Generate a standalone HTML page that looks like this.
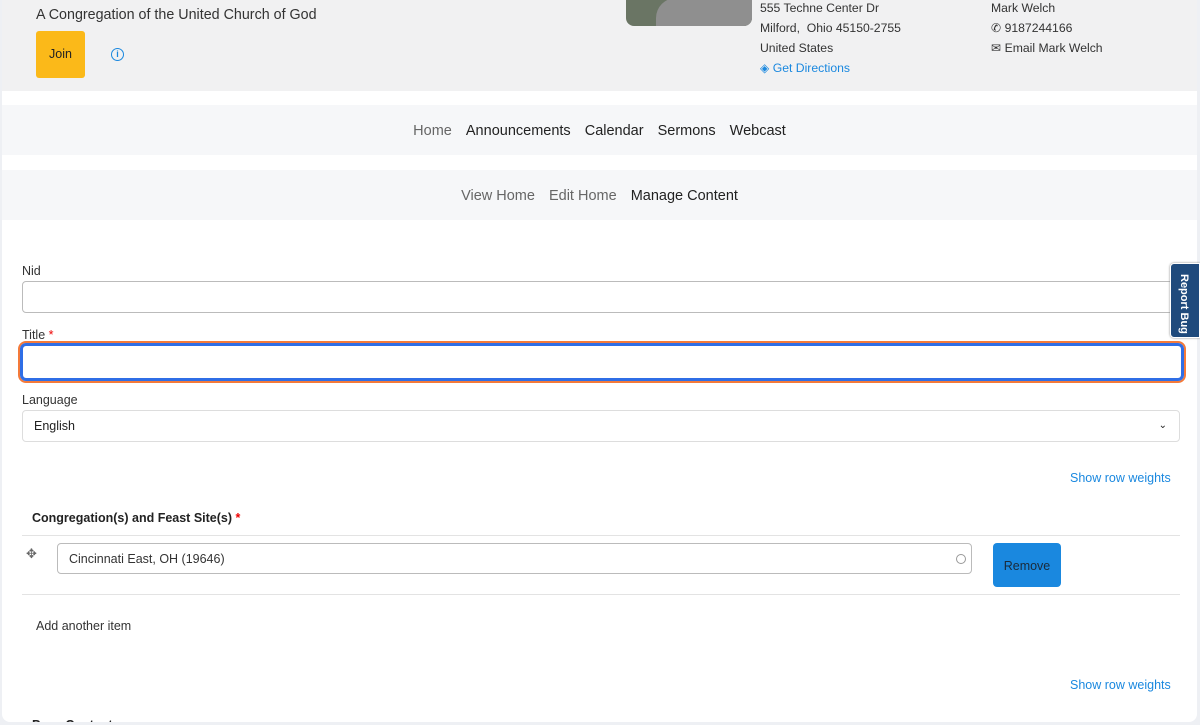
<!DOCTYPE html>
<html><head><meta charset="utf-8"><style>
*{box-sizing:border-box;margin:0;padding:0}
body{width:1200px;height:725px;overflow:hidden;background:#eef0f4;font-family:"Liberation Sans",sans-serif;color:#222;position:relative}
.card{position:absolute;left:2px;top:-10px;width:1195px;height:732px;background:#fff;border-radius:8px;overflow:hidden}
.hdr{position:absolute;left:-2px;top:0;width:1200px;height:101px;background:#f1f1f2}
.abs{position:absolute}
.t13{font-size:12.5px;color:#333}
.nav{position:absolute;left:0;width:100%;height:50px;background:#f6f7f9;text-align:center;font-size:14.5px;line-height:52px}
.nav span{margin:0 5px;color:#222}
.nav .g{color:#666}
label{position:absolute;font-size:12.5px;color:#333}
.inp{position:absolute;border:1px solid #bbb;border-radius:4px;background:#fff}
.link{color:#1a88df;font-size:12.5px}
</style></head><body>
<div class="card">
<div class="hdr"></div>
<div class="abs" style="left:34px;top:17px;font-size:14.3px;color:#333">A Congregation of the United Church of God</div>
<div class="abs" style="left:34px;top:41px;width:49px;height:47px;background:#fbb919;border-radius:3px;font-size:12.5px;line-height:47px;text-align:center;color:#222">Join</div>
<div class="abs" style="left:109px;top:58px;width:13px;height:13px;border:1.5px solid #1a88df;border-radius:50%;font-size:9px;line-height:10px;text-align:center;color:#1a88df;font-weight:bold">i</div>
<div class="abs" style="left:624px;top:0;width:126px;height:36px;background:#6a7564;border-radius:0 0 8px 8px;overflow:hidden"><div style="position:absolute;left:30px;top:8px;width:100px;height:30px;background:#8f8f8f;border-radius:20px 0 0 0"></div></div>
<div class="abs t13" style="left:758px;top:8px;line-height:20px;font-size:12.2px">555 Techne Center Dr<br>Milford,&nbsp; Ohio 45150-2755<br>United States<br><span class="link" style="font-size:12.2px">&#9672; Get Directions</span></div>
<div class="abs t13" style="left:989px;top:8px;line-height:20px;font-size:12.2px">Mark Welch<br>&#9990; 9187244166<br>&#9993; Email Mark Welch</div>
<div class="nav" style="top:115px"><span class="g">Home</span> <span>Announcements</span> <span>Calendar</span> <span>Sermons</span> <span>Webcast</span></div>
<div class="nav" style="top:180px"><span class="g">View Home</span> <span class="g">Edit Home</span> <span>Manage Content</span></div>
<label style="left:20px;top:274px">Nid</label>
<div class="inp" style="left:20px;top:291px;width:1160px;height:32px"></div>
<label style="left:20px;top:338px">Title <span style="color:#e00">*</span></label>
<div class="inp" style="left:16px;top:351px;width:1168px;height:42px;border:2px solid #f47a3a;border-radius:8px;padding:0"><div style="width:100%;height:100%;border:3px solid #2f6ee6;border-radius:6px"></div></div>
<label style="left:20px;top:403px">Language</label>
<div class="inp" style="left:20px;top:420px;width:1158px;height:32px;border-color:#ddd;font-size:12.5px;line-height:30px;padding-left:11px">English<span style="position:absolute;right:12px;top:0;font-size:10px">&#8964;</span></div>
<div class="abs link" style="left:1068px;top:481px">Show row weights</div>
<div class="abs" style="left:30px;top:521px;font-size:12.5px;font-weight:bold">Congregation(s) and Feast Site(s) <span style="color:#e00">*</span></div>
<div class="abs" style="left:20px;top:545px;width:1158px;border-top:1px solid #e3e3e3"></div>
<div class="abs" style="left:24px;top:556px;font-size:13px;color:#666">&#10021;</div>
<div class="inp" style="left:55px;top:553px;width:915px;height:31px;font-size:12.5px;line-height:30px;padding-left:11px;color:#333">Cincinnati East, OH (19646)<span style="position:absolute;right:5px;top:10px;width:10px;height:10px;border:1px solid #999;border-radius:50%"></span></div>
<div class="abs" style="left:991px;top:553px;width:68px;height:44px;background:#1a88df;border-radius:4px;font-size:12.5px;line-height:46px;text-align:center;color:#1a2a3a">Remove</div>
<div class="abs" style="left:20px;top:604px;width:1158px;border-top:1px solid #e3e3e3"></div>
<div class="abs t13" style="left:34px;top:629px">Add another item</div>
<div class="abs link" style="left:1068px;top:688px">Show row weights</div>
<div class="abs" style="left:30px;top:728px;font-size:12.5px;font-weight:bold">Page Content</div>
</div>
<div class="abs" style="left:1170px;top:263px;width:30px;height:75px;background:#1f4a7c;border:1px solid #fff;border-radius:4px 0 0 4px;box-shadow:0 0 2px #888"><div style="position:absolute;left:7px;top:10px;writing-mode:vertical-rl;color:#fff;font-size:11px;font-weight:bold">Report Bug</div></div>
</body></html>
